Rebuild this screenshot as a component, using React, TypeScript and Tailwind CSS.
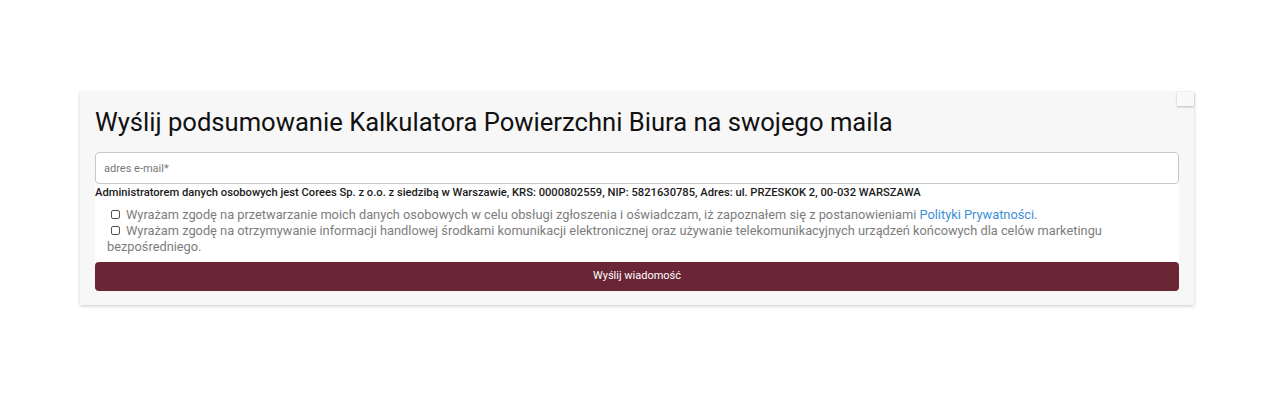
export default function App() {
  return (
    <div className="min-h-[409px] bg-white font-['Roboto',sans-serif] pt-[92px] pl-[80px]">
      <div className="relative w-[1114px] bg-[#f7f7f7] shadow-[0_1px_3px_rgba(0,0,0,0.22)] px-[15px] pt-[12px] pb-[14px]">
        <div className="absolute right-0 top-0 w-[17px] h-[14px] bg-[#f9f9f9] shadow-[0_1px_2px_rgba(0,0,0,0.25)]" />
        <h2 className="text-[25.6px] leading-[36px] text-[#111] font-normal">
          Wyślij podsumowanie Kalkulatora Powierzchni Biura na swojego maila
        </h2>
        <form className="mt-[12px] bg-white flex flex-col">
          <input
            type="email"
            placeholder="adres e-mail*"
            className="h-[32px] w-full rounded-[4px] border border-[#c8c8c8] bg-white px-[8px] text-[11px] text-[#333] placeholder:text-[#777] outline-none"
          />
          <p className="mt-[2px] text-[11.2px] leading-[14px] font-medium text-[#1a1a1a]">
            Administratorem danych osobowych jest Corees Sp. z o.o. z siedzibą w Warszawie, KRS: 0000802559, NIP: 5821630785, Adres: ul. PRZESKOK 2, 00-032 WARSZAWA
          </p>
          <div className="mt-[7px] pl-[12px] text-[12.8px] leading-[16px] text-[#7d7d7d]">
            <label className="block">
              <span className="inline-block w-[9px] h-[9px] border border-[#555] rounded-[2px] ml-[4px] mr-[6px] align-[0px]" />
              Wyrażam zgodę na przetwarzanie moich danych osobowych w celu obsługi zgłoszenia i oświadczam, iż zapoznałem się z postanowieniami{' '}
              <a className="text-[#3c8fd8]">Polityki Prywatności</a>.
            </label>
            <label className="block">
              <span className="inline-block w-[9px] h-[9px] border border-[#555] rounded-[2px] ml-[4px] mr-[6px] align-[0px]" />
              Wyrażam zgodę na otrzymywanie informacji handlowej środkami komunikacji elektronicznej oraz używanie telekomunikacyjnych urządzeń końcowych dla celów marketingu bezpośredniego.
            </label>
          </div>
          <button
            type="button"
            className="mt-[7px] h-[29px] w-full rounded-[4px] bg-[#6a2635] text-[11px] text-white"
          >
            Wyślij wiadomość
          </button>
        </form>
      </div>
    </div>
  );
}
